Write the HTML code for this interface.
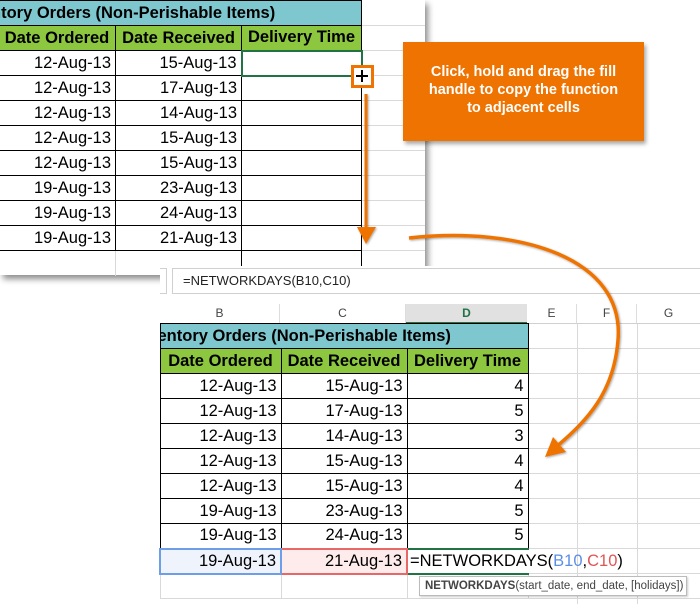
<!DOCTYPE html>
<html><head><meta charset="utf-8"><style>
*{margin:0;padding:0;box-sizing:border-box}
body{width:700px;height:604px;position:relative;overflow:hidden;background:#fff;font-family:"Liberation Sans",Arial,sans-serif}
.a{position:absolute}
table{border-collapse:collapse;table-layout:fixed;position:absolute}
td{height:25px;border:1px solid #000;font-size:16.5px;text-align:right;padding:0 4px 0 0;white-space:nowrap;overflow:hidden;line-height:23px}
td.t{background:#7fc7cf;font-weight:bold;text-align:left;border-right:1px solid #000;padding-left:0}
td.h{background:#8dc63f;font-weight:bold;text-align:center;padding:0}
td.g{border:1px solid #d9d9d9}
td.n{border:none}
</style></head><body>

<!-- top sheet -->
<div class="a" style="left:0;top:0;width:425px;height:275px;background:#fff;box-shadow:3px 4px 6px rgba(0,0,0,0.45)"></div>
<div class="a" style="left:361px;top:1px;width:64px;height:274px;background:repeating-linear-gradient(#fff 0 24px,#d9d9d9 24px 25px)"></div>
<table style="left:-2px;top:0px;width:364px">
<colgroup><col style="width:117px"><col style="width:126px"><col style="width:120px"></colgroup>
<tr><td class="t" colspan="3" style="text-indent:-8px">ntory Orders (Non-Perishable Items)</td></tr>
<tr><td class="h">Date Ordered</td><td class="h">Date Received</td><td class="h">Delivery Time</td></tr>
<tr><td>12-Aug-13</td><td>15-Aug-13</td><td style="border:2px solid #217346"></td></tr>
<tr><td>12-Aug-13</td><td>17-Aug-13</td><td></td></tr>
<tr><td>12-Aug-13</td><td>14-Aug-13</td><td></td></tr>
<tr><td>12-Aug-13</td><td>15-Aug-13</td><td></td></tr>
<tr><td>12-Aug-13</td><td>15-Aug-13</td><td></td></tr>
<tr><td>19-Aug-13</td><td>23-Aug-13</td><td></td></tr>
<tr><td>19-Aug-13</td><td>24-Aug-13</td><td></td></tr>
<tr><td>19-Aug-13</td><td>21-Aug-13</td><td></td></tr>
<tr><td style="border-left:none;border-bottom:none;border-right:1px solid #d9d9d9"></td><td style="border-left:none;border-bottom:none;border-right:1px solid #000"></td><td style="border-bottom:none;border-right:1px solid #000"></td></tr>
</table>
<div class="a" style="left:351px;top:65px;width:23px;height:23px;border:3px solid #ef7300;background:#fff"></div>
<div class="a" style="left:356px;top:75px;width:12px;height:2px;background:#000"></div>
<div class="a" style="left:361px;top:70px;width:2px;height:12px;background:#000"></div>

<!-- callout -->
<div class="a" style="left:403px;top:42px;width:241px;height:99px;background:#ef7300;box-shadow:2px 3px 4px rgba(0,0,0,0.35);color:#fff;font-weight:bold;font-size:14.5px;line-height:18px;text-align:center;padding-top:21px">Click, hold and drag the fill<br>handle to copy the function<br>to adjacent cells</div>

<!-- bottom sheet -->
<div class="a" style="left:160px;top:266px;width:540px;height:338px;background:#fff"></div>
<div class="a" style="left:160px;top:268px;width:7px;height:26px;border:1px solid #d0d0d0;border-left:none"></div>
<div class="a" style="left:172px;top:268px;width:530px;height:26px;border:1px solid #d0d0d0;font-size:13px;line-height:24px;padding-left:10px;color:#222">=NETWORKDAYS(B10,C10)</div>
<div class="a" style="left:160px;top:304px;width:540px;height:20px;border-bottom:1px solid #d0d0d0;font-size:12px;color:#444;line-height:19px">
<span class="a" style="left:0;width:120px;text-align:center;border-right:1px solid #ddd;height:19px">B</span>
<span class="a" style="left:120px;width:126px;text-align:center;border-right:1px solid #ddd;height:19px">C</span>
<span class="a" style="left:246px;width:121px;text-align:center;background:#e1e1e1;color:#217346;font-weight:bold;border-bottom:2px solid #217346;height:20px">D</span>
<span class="a" style="left:367px;width:50px;text-align:center;border-right:1px solid #ddd;height:19px">E</span>
<span class="a" style="left:417px;width:60px;text-align:center;border-right:1px solid #ddd;height:19px">F</span>
<span class="a" style="left:477px;width:63px;text-align:center;height:19px">G</span>
</div>
<div class="a" style="left:527px;top:324px;width:173px;height:280px;background:repeating-linear-gradient(#fff 0 24px,#d9d9d9 24px 25px)"></div>
<div class="a" style="left:577px;top:324px;width:1px;height:280px;background:#d9d9d9"></div>
<div class="a" style="left:637px;top:324px;width:1px;height:280px;background:#d9d9d9"></div>
<table style="left:159px;top:323px;width:368px">
<colgroup><col style="width:121px"><col style="width:126px"><col style="width:121px"></colgroup>
<tr><td class="t" colspan="3" style="text-indent:-3px">entory Orders (Non-Perishable Items)</td></tr>
<tr><td class="h">Date Ordered</td><td class="h">Date Received</td><td class="h">Delivery Time</td></tr>
<tr><td>12-Aug-13</td><td>15-Aug-13</td><td>4</td></tr>
<tr><td>12-Aug-13</td><td>17-Aug-13</td><td>5</td></tr>
<tr><td>12-Aug-13</td><td>14-Aug-13</td><td>3</td></tr>
<tr><td>12-Aug-13</td><td>15-Aug-13</td><td>4</td></tr>
<tr><td>12-Aug-13</td><td>15-Aug-13</td><td>4</td></tr>
<tr><td>19-Aug-13</td><td>23-Aug-13</td><td>5</td></tr>
<tr><td>19-Aug-13</td><td>24-Aug-13</td><td>5</td></tr>
<tr><td style="background:#eef3fc;border:2px solid #6f9ee8">19-Aug-13</td><td style="background:#fdeceb;border:2px solid #e86767">21-Aug-13</td><td style="border:2px solid #217346;border-right:none;border-bottom:2px solid #217346;text-align:left;padding-left:2px;overflow:visible">=NETWORKDAYS(<span style="color:#5b8ee6">B10</span>,<span style="color:#e05555">C10</span>)</td></tr>
<tr><td class="g" style="border-top:none"></td><td class="g" style="border-top:none"></td><td class="g" style="border-top:none"></td></tr>
</table>
<div class="a" style="left:419px;top:576px;width:268px;height:20px;border:1px solid #bbb;background:#fff;box-shadow:1px 1px 2px rgba(0,0,0,0.2);font-size:11.5px;line-height:18px;color:#444;padding-left:5px;white-space:nowrap"><b>NETWORKDAYS</b>(start_date, end_date, [holidays])</div>

<!-- arrows -->
<svg class="a" style="left:0;top:0" width="700" height="604">
<defs><filter id="s"><feDropShadow dx="1" dy="1" stdDeviation="1" flood-opacity="0.35"/></filter></defs>
<g filter="url(#s)" fill="#ef7300" stroke="#ef7300">
<line x1="366" y1="94" x2="366" y2="230" stroke-width="3"/>
<polygon points="357,227 376,227 366,244" stroke="none"/>
<path d="M409,238 C520,226 625,258 618,340 C614,392 588,420 556,447" fill="none" stroke-width="3.5"/>
<polygon points="545,457 553,437 566,452" stroke="none"/>
</g>
</svg>
</body></html>
